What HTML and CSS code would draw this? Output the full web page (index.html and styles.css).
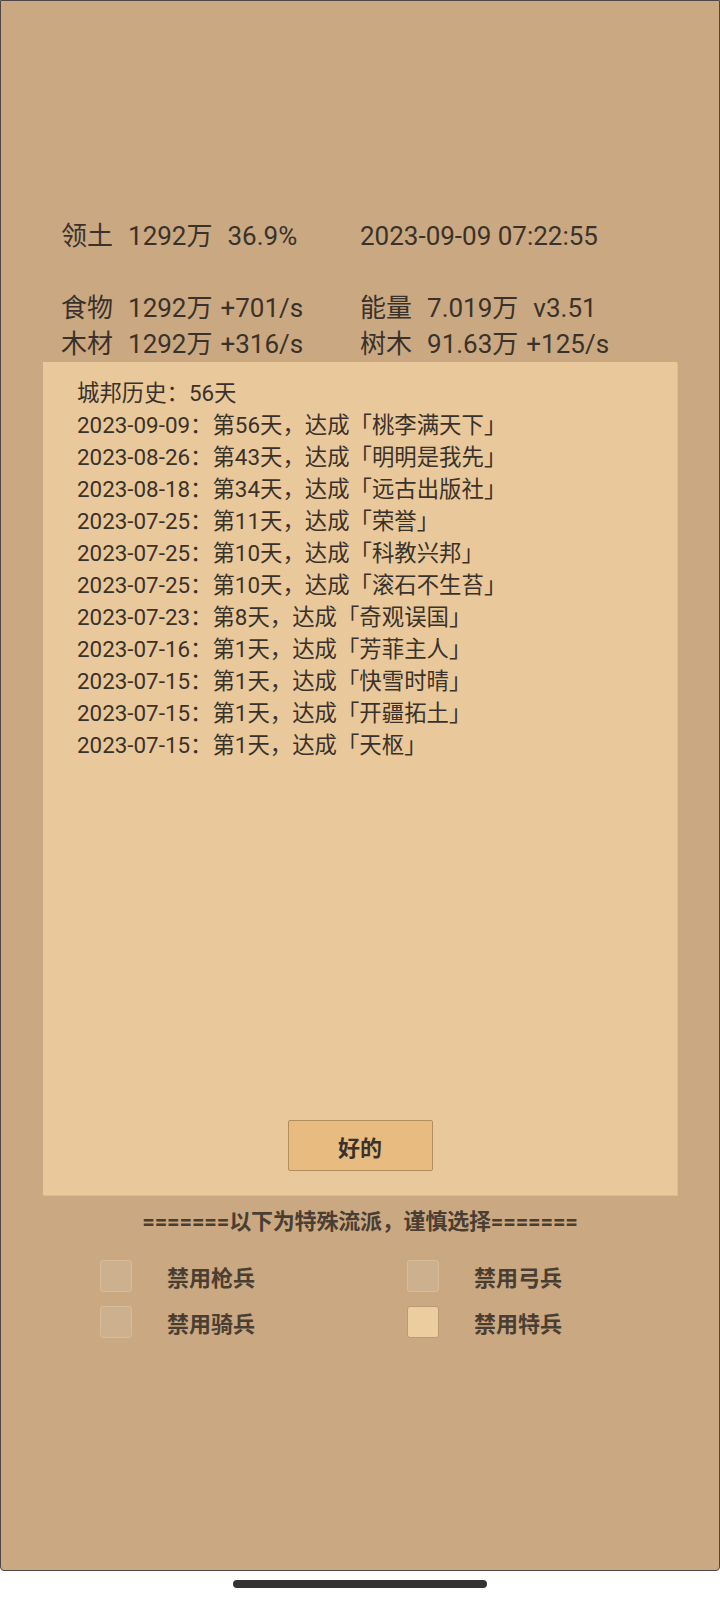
FILE: index.html
```html
<!DOCTYPE html>
<html>
  <head>
    <meta name="viewport" content="width=device-width, initial-scale=1" />
    <link rel="stylesheet" href="styles.css">
  </head>

  <body>
    <div class="screen">

      <div class="stats">
        <div class="stat">
          <span class="lbl">领土</span><span class="val">1292万</span><span class="extra">36.9%</span>
        </div>
        <div class="stat">
          <span class="clock">2023-09-09 07:22:55</span>
        </div>
        <div class="stat blank"></div>
        <div class="stat blank"></div>
        <div class="stat">
          <span class="lbl">食物</span><span class="val">1292万</span><span class="rate">+701/s</span>
        </div>
        <div class="stat">
          <span class="lbl">能量</span><span class="val">7.019万</span><span class="extra">v3.51</span>
        </div>
        <div class="stat">
          <span class="lbl">木材</span><span class="val">1292万</span><span class="rate">+316/s</span>
        </div>
        <div class="stat">
          <span class="lbl">树木</span><span class="val">91.63万</span><span class="rate">+125/s</span>
        </div>
      </div>

      <div class="history">
        <div class="history-list">
          <div>城邦历史：56天</div>
          <div>2023-09-09：第56天，达成「桃李满天下」</div>
          <div>2023-08-26：第43天，达成「明明是我先」</div>
          <div>2023-08-18：第34天，达成「远古出版社」</div>
          <div>2023-07-25：第11天，达成「荣誉」</div>
          <div>2023-07-25：第10天，达成「科教兴邦」</div>
          <div>2023-07-25：第10天，达成「滚石不生苔」</div>
          <div>2023-07-23：第8天，达成「奇观误国」</div>
          <div>2023-07-16：第1天，达成「芳菲主人」</div>
          <div>2023-07-15：第1天，达成「快雪时晴」</div>
          <div>2023-07-15：第1天，达成「开疆拓土」</div>
          <div>2023-07-15：第1天，达成「天枢」</div>
        </div>
        <button class="ok-btn">好的</button>
      </div>

      <div class="warn">=======以下为特殊流派，谨慎选择=======</div>

      <div class="options">
        <label class="opt"><span class="box"></span>禁用枪兵</label>
        <label class="opt"><span class="box"></span>禁用弓兵</label>
        <label class="opt"><span class="box"></span>禁用骑兵</label>
        <label class="opt"><span class="box on"></span>禁用特兵</label>
      </div>

    </div>

    <div class="home-bar"></div>
  </body>
</html>
```

FILE: styles.css
```css
  body {
    margin: 0;
    background-color: #fff;
    font-family: Roboto, "Noto Sans CJK SC", sans-serif;
    color: #3a322a;
  }

  .screen {
    height: 1571px;
    box-sizing: border-box;
    background-color: #caa982;
    border: 1px solid #4a4744;
    border-radius: 0 0 4px 4px;
    padding-top: 217px;
  }

  .stats {
    display: grid;
    grid-template-columns: 299px 300px;
    padding-left: 60px;
    font-size: 26px;
    line-height: 36px;
  }

  .stat {
    display: flex;
    white-space: nowrap;
  }

  .blank {
    height: 36px;
  }

  .lbl {
    margin-right: 15px;
  }

  .extra {
    margin-left: 15px;
  }

  .rate {
    margin-left: 8px;
  }

  .history {
    margin: 0 42px 0 42px;
    height: 833px;
    box-sizing: border-box;
    background-color: #e9c99b;
    box-shadow: 1px 1px 0 #dcbc90;
    padding: 15px 0 24px 34px;
    display: flex;
    flex-direction: column;
  }

  .history-list {
    font-size: 22.4px;
    line-height: 32px;
  }

  .ok-btn {
    margin-top: auto;
    align-self: center;
    margin-left: -34px;
    width: 145px;
    height: 51px;
    background-color: #e8bc80;
    border: 1px solid #b48d5e;
    border-radius: 2px;
    font-family: Roboto, "Noto Sans CJK SC", sans-serif;
    font-size: 22px;
    font-weight: bold;
    color: #3a322a;
  }

  .warn {
    text-align: center;
    font-size: 22px;
    font-weight: bold;
    line-height: 32px;
    margin-top: 11px;
    color: #4a3e32;
    letter-spacing: -0.2px;
  }

  .options {
    display: grid;
    grid-template-columns: 307px 307px;
    row-gap: 14px;
    padding-left: 99px;
    margin-top: 22px;
  }

  .opt {
    display: flex;
    align-items: center;
    height: 32px;
    font-size: 22px;
    font-weight: bold;
    color: #4a3e32;
  }

  .box {
    width: 30px;
    height: 30px;
    margin-right: 35px;
    border: 1px solid #d6bc9a;
    border-radius: 3px;
    background-color: #cdb18f;
  }

  .box.on {
    background-color: #ebcd9f;
    border-color: #b99a72;
  }

  .home-bar {
    width: 254px;
    height: 8px;
    margin: 9px auto 0 auto;
    border-radius: 4px;
    background-color: #333;
  }
```
